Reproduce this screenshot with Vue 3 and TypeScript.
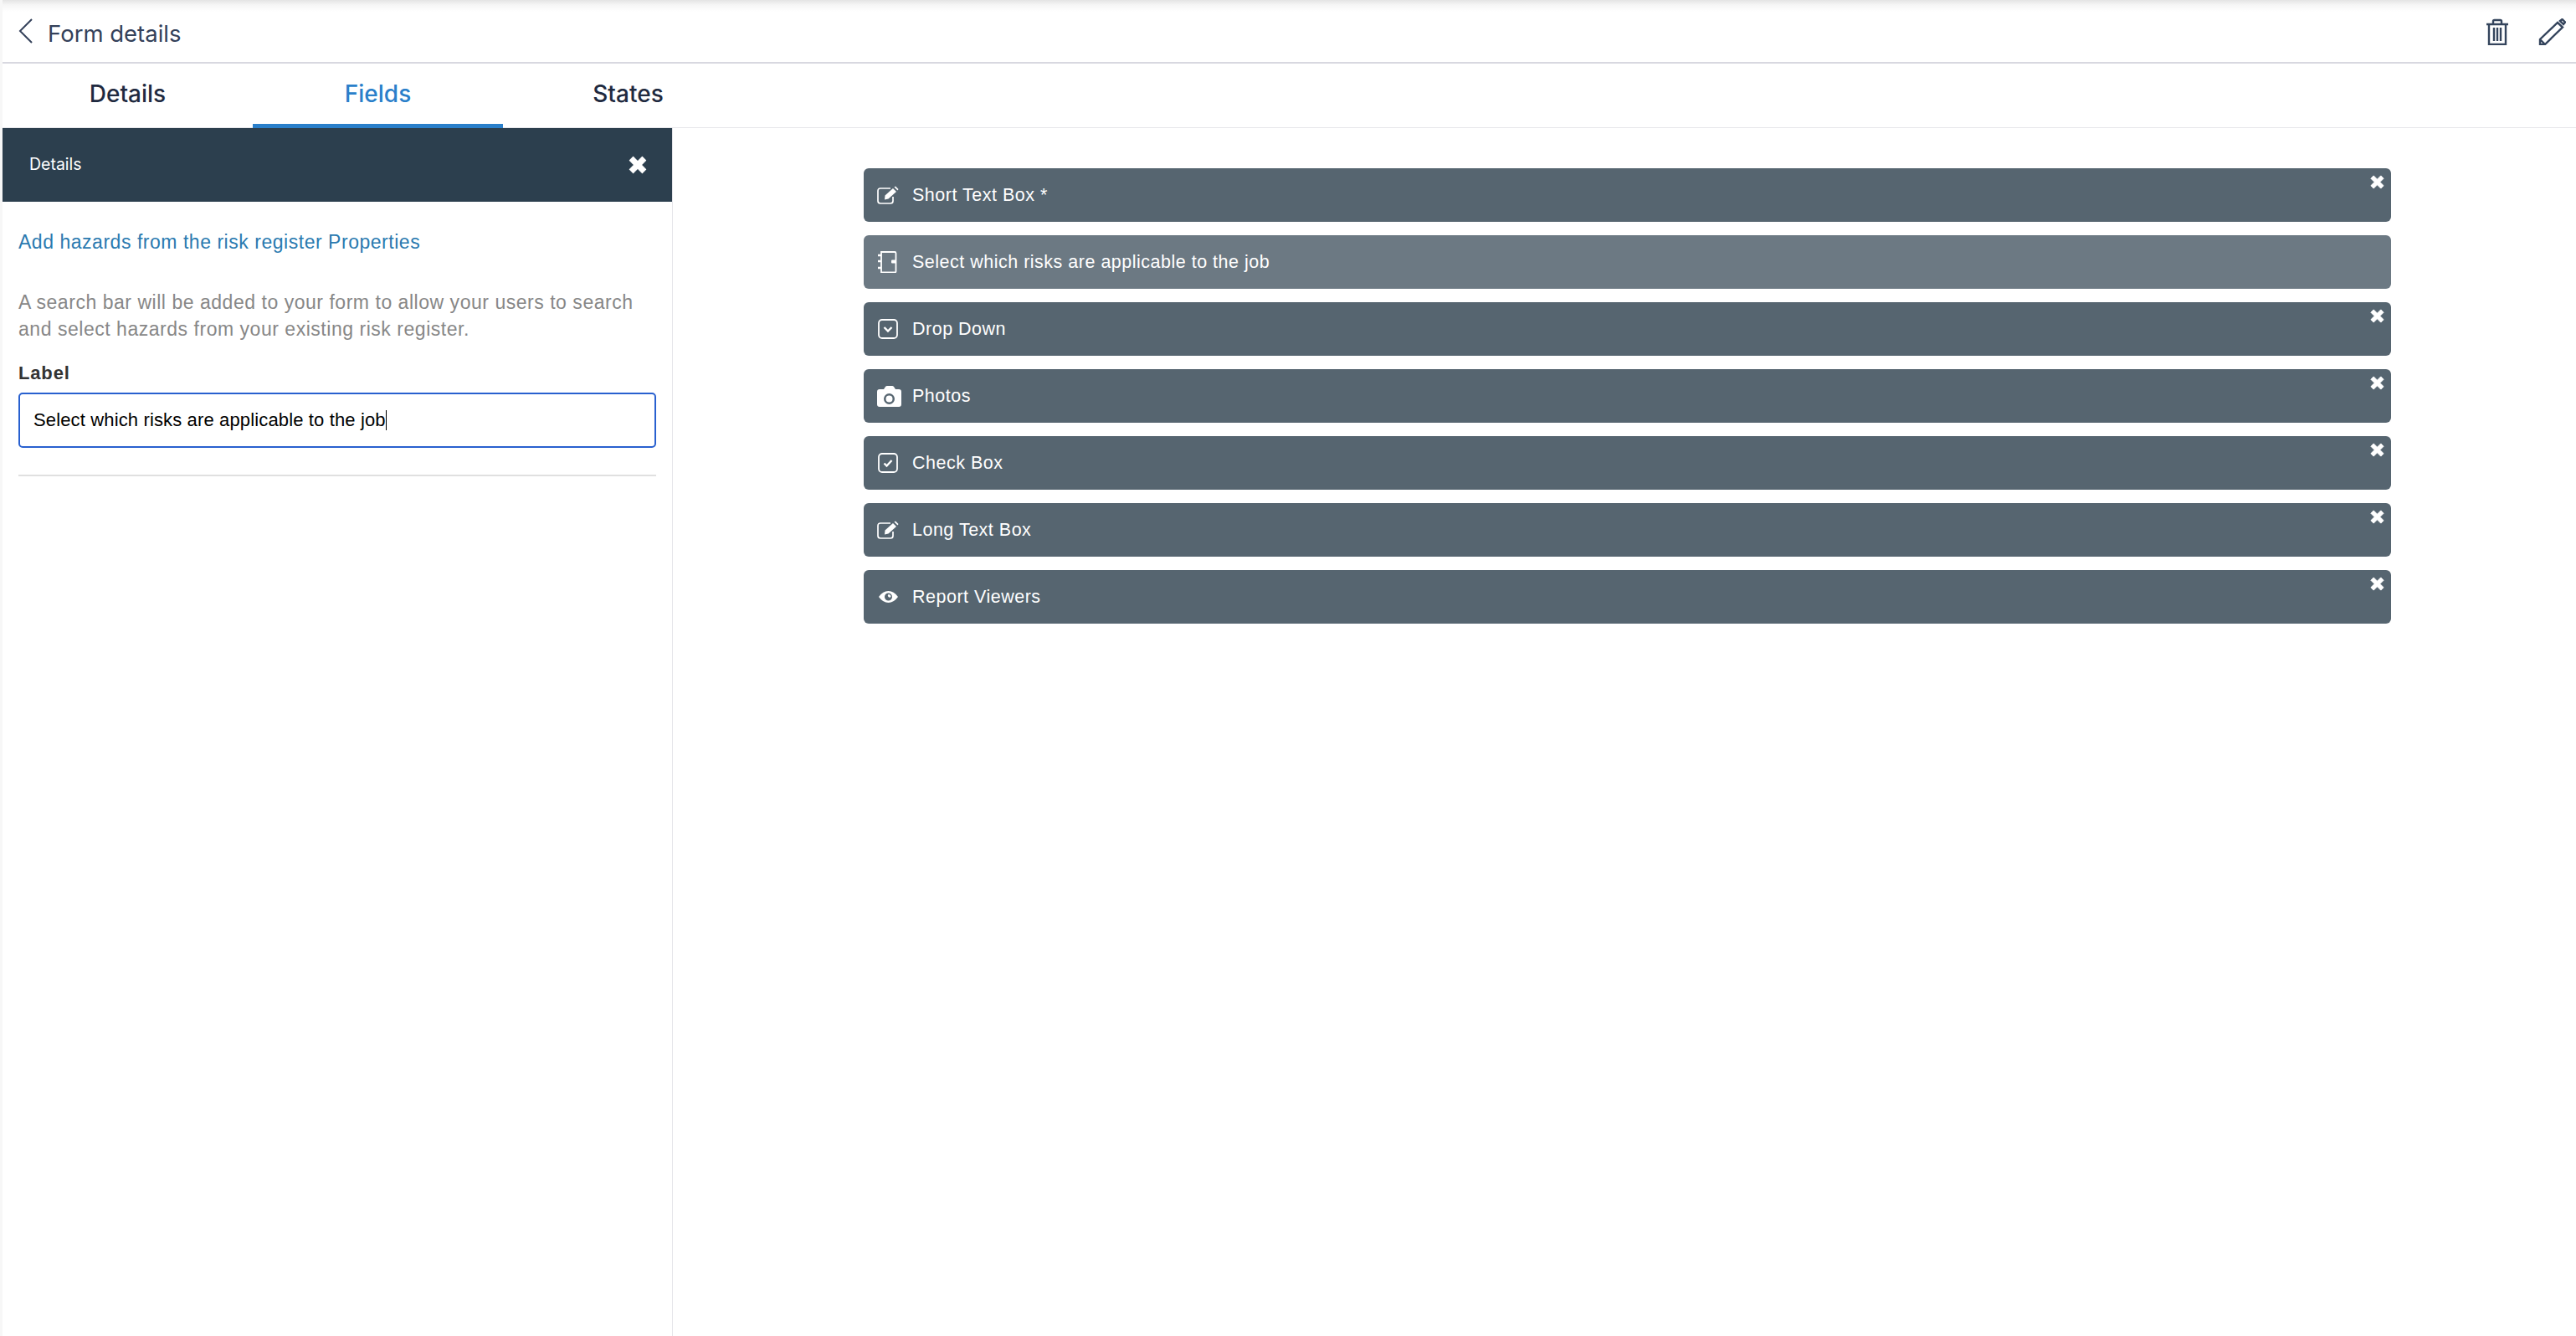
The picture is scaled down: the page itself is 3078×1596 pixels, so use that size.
<script setup lang="ts">
type Kind = 'edit' | 'notebook' | 'dropdown' | 'camera' | 'check' | 'eye'
interface Field { label: string; icon: Kind; active?: boolean }
const tabs = ['Details', 'Fields', 'States']
const fields: Field[] = [
  { label: 'Short Text Box *', icon: 'edit' },
  { label: 'Select which risks are applicable to the job', icon: 'notebook', active: true },
  { label: 'Drop Down', icon: 'dropdown' },
  { label: 'Photos', icon: 'camera' },
  { label: 'Check Box', icon: 'check' },
  { label: 'Long Text Box', icon: 'edit' },
  { label: 'Report Viewers', icon: 'eye' }
]
</script>

<template>
  <div class="page">
    <header class="top">
      <div class="title">
        <svg class="back" viewBox="0 0 17 30" width="17" height="30"><path d="M16 1 2 15l14 14" fill="none" stroke="#34415a" stroke-width="2"/></svg>
        <span>Form details</span>
      </div>
      <div class="actions">
        <svg viewBox="0 0 26 32" width="26" height="32" fill="none" stroke="#34445c" stroke-width="2.4">
          <path d="M0 7h26M8 7V3.500Q8 2 9.500 2h7Q18 2 18 3.500V7M3 7v24h20V7M9 11v16M13 11v16M17 11v16"/>
        </svg>
        <svg viewBox="0 0 33 32" width="33" height="32" fill="none" stroke="#34445c" stroke-width="2.400">
          <path d="M2 31v-6L23 5l6 5.500L8 31ZM2 25l6 6M26 3l2.500-2 3.500 3.500-2 2.500Z"/>
        </svg>
      </div>
    </header>
    <nav class="tabs">
      <div v-for="t in tabs" :key="t" class="tab" :class="{ on: t === 'Fields' }">{{ t }}</div>
    </nav>
    <main class="body">
      <aside class="panel">
        <div class="panel-head">
          <span>Details</span>
          <svg viewBox="0 0 20 20" width="24" height="24"><path d="M2 5.500 5.500 2 10 6.500 14.500 2 18 5.500 13.500 10 18 14.500 14.500 18 10 13.500 5.500 18 2 14.500 6.500 10Z" fill="#fff" stroke="#fff" stroke-linejoin="round"/></svg>
        </div>
        <div class="panel-body">
          <a class="link">Add hazards from the risk register Properties</a>
          <p class="desc">A search bar will be added to your form to allow your users to search and select hazards from your existing risk register.</p>
          <label class="lab">Label</label>
          <div class="input" role="textbox">Select which risks are applicable to the job<i class="caret"></i></div>
          <hr class="rule" />
        </div>
      </aside>
      <section class="canvas">
        <div class="list">
          <div v-for="f in fields" :key="f.label" class="row" :class="{ active: f.active }">
            <span class="ico">
              <svg v-if="f.icon === 'edit'" viewBox="0 0 26 22" width="26" height="22" fill="none" stroke="#fff" stroke-width="1.700">
                <path d="M16 3H4Q1 3 1 6v12q0 3 3 3h12q3 0 3-3v-5"/>
                <path d="M9.500 11.500 19 3l4 4-9.500 8.500-4.500 1Z" fill="#fff" stroke="none"/>
                <path d="M20.500 1.500 22 .5l3.500 3.500-1 1.500Z" fill="#fff" stroke="none"/>
              </svg>
              <svg v-else-if="f.icon === 'notebook'" viewBox="0 0 24 26" width="24" height="26" fill="none" stroke="#fff" stroke-width="1.800">
                <path d="M5 1h16q1.500 0 1.500 1.500V24q0 1.500-1.500 1.500H5Z"/>
                <path d="M1 5h4M1 12h4M1 20h4" stroke-width="2.400"/>
                <rect x="17" y="10.500" width="6" height="4" rx="1" fill="#fff" stroke="none"/>
              </svg>
              <svg v-else-if="f.icon === 'dropdown'" class="shift" viewBox="0 0 24 24" width="24" height="24" fill="none" stroke="#fff" stroke-width="1.800">
                <rect x="1" y="1" width="22" height="22" rx="4"/>
                <path d="m7.500 10 4.500 4.500 4.500-4.500" stroke-width="2.400"/>
              </svg>
              <svg v-else-if="f.icon === 'camera'" viewBox="0 0 29 25" width="29" height="25">
                <path fill="#fff" fill-rule="evenodd" d="M3 4h5l2-3q.6-1 2-1h6q1.400 0 2 1l2 3h4q3 0 3 3v15q0 3-3 3H3q-3 0-3-3V7q0-3 3-3Zm11.500 5a6.500 6.500 0 1 0 0 13 6.500 6.500 0 0 0 0-13Zm0 2.500a4 4 0 1 1 0 8 4 4 0 0 1 0-8Z"/>
              </svg>
              <svg v-else-if="f.icon === 'check'" class="shift" viewBox="0 0 24 24" width="24" height="24" fill="none" stroke="#fff" stroke-width="1.800">
                <rect x="1" y="1" width="22" height="22" rx="4"/>
                <path d="m7.500 12.500 3 3 6-6.500" stroke-width="2.400"/>
              </svg>
              <svg v-else class="shift2" viewBox="0 0 23 14" width="23" height="14">
                <path fill="#fff" fill-rule="evenodd" d="M0 7Q5 0 11.500 0T23 7q-5 7-11.500 7T0 7Zm11.500-4.500a4.500 4.500 0 1 0 0 9 4.500 4.500 0 0 0 0-9Zm0 1.500a3 3 0 0 1 3 3 1.500 1.500 0 0 1-3-3Z"/>
              </svg>
            </span>
            <span class="txt">{{ f.label }}</span>
            <svg v-if="!f.active" class="x" viewBox="0 0 20 20" width="19" height="19"><path d="M2 5.500 5.500 2 10 6.500 14.500 2 18 5.500 13.500 10 18 14.500 14.500 18 10 13.500 5.500 18 2 14.500 6.500 10Z" fill="#fff" stroke="#fff" stroke-linejoin="round"/></svg>
          </div>
        </div>
      </section>
    </main>
  </div>
</template>

<style>
html, body { margin: 0; background: #fff; }
</style>

<style scoped>
.page { width: 3078px; height: 1596px; display: flex; flex-direction: column; overflow: hidden; background: #f7f7f7; }
.top { height: 76px; box-sizing: border-box; margin-left: 3px; flex: none; display: flex; align-items: center; justify-content: space-between; border-bottom: 2px solid #d8d8e0; padding: 4px 12px 0 19px; background: linear-gradient(#e4e4e4 0, #f6f6f6 6px, #fff 14px); }
.title { display: flex; align-items: center; gap: 18px; font: 400 27.500px "Inter", sans-serif; color: #34415a; }
.title span { margin-top: 1px; }
.back { margin-top: -4px; }
.actions { display: flex; align-items: center; gap: 36px; margin-top: -3px; }
.tabs { height: 77px; flex: none; box-sizing: border-box; margin-left: 3px; display: flex; border-bottom: 1px solid #e6e6ea; background: #fff; }
.tab { width: 299px; height: 77px; box-sizing: border-box; padding-top: 19px; text-align: center; font: 500 28px "Inter", sans-serif; color: #1f2a40; }
.tab.on { color: #2a7fca; border-bottom: 6px solid #2a7fca; height: 78px; }
.body { flex: 1; display: flex; min-height: 0; }
.panel { width: 801px; margin-left: 3px; flex: none; box-sizing: border-box; border-right: 1px solid #e6e6ea; background: #fff; }
.panel-head { height: 88px; background: #2c3f4e; display: flex; align-items: center; justify-content: space-between; padding: 0 29px 0 32px; color: #fff; font: 400 19.500px "Inter", sans-serif; }
.panel-head span { margin-top: -2px; }
.panel-body { padding: 35px 19px 0; }
.link { display: block; color: #2a7ab0; font: 400 23px/26px "Liberation Sans", sans-serif; letter-spacing: .53px; }
.desc { margin: 43px 0 0; color: #878787; font: 400 23px/32px "Liberation Sans", sans-serif; letter-spacing: .53px; }
.lab { display: block; margin-top: 24px; color: #333; font: 700 22px/26px "Liberation Sans", sans-serif; letter-spacing: .85px; }
.input { margin-top: 10px; height: 66px; box-sizing: border-box; border: 2px solid #2860cf; border-radius: 5px; padding: 0 16px; display: flex; align-items: center; color: #000; font: 400 22px "Liberation Sans", sans-serif; letter-spacing: .14px; }
.caret { width: 1px; height: 24px; background: #000; }
.rule { border: 0; border-top: 2px solid #e0e0e0; margin: 32px 0 0; }
.canvas { flex: 1; padding: 48px 0 0 228px; background: #fff; }
.list { width: 1825px; display: flex; flex-direction: column; gap: 16px; }
.row { position: relative; height: 64px; box-sizing: border-box; border-radius: 6px; background: #566570; display: flex; align-items: center; padding-left: 16px; color: #fff; font: 400 21.500px "Liberation Sans", sans-serif; letter-spacing: .5px; }
.row.active { background: #6c7983; }
.ico { width: 42px; flex: none; display: flex; align-items: center; }
.shift { margin-left: 1px; }
.shift2 { margin-left: 2px; }
.x { position: absolute; top: 7px; right: 7px; }
</style>
